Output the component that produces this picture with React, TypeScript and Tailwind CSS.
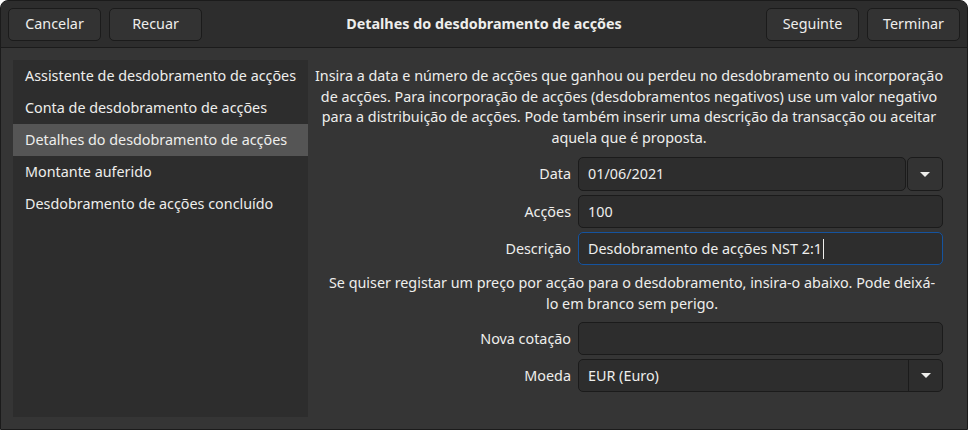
import React from 'react';

const steps = [
  'Assistente de desdobramento de acções',
  'Conta de desdobramento de acções',
  'Detalhes do desdobramento de acções',
  'Montante auferido',
  'Desdobramento de acções concluído',
];

function HeaderButton({ label }: { label: string }) {
  return (
    <button className="h-[33px] w-[93px] rounded-[5px] border border-[#1b1b1b] bg-[#333333] text-[#eeeeec]">
      {label}
    </button>
  );
}

function Caret() {
  return (
    <svg width="12" height="7" viewBox="0 0 12 7">
      <path d="M1 1h10L6 6z" fill="#eeeeec" />
    </svg>
  );
}

function FieldRow({ label, children }: { label: string; children: React.ReactNode }) {
  return (
    <>
      <div className="flex items-center justify-end">{label}</div>
      {children}
    </>
  );
}

export default function App() {
  return (
    <div
      className="w-[968px] h-[430px] overflow-hidden rounded-t-[8px] border border-[#1b1b1b] bg-[#353535] text-[14.35px] text-[#eeeeec] flex flex-col"
      style={{ fontFamily: '"Noto Sans", sans-serif' }}
    >
      <div className="h-[47px] shrink-0 border-b border-[#1b1b1b] bg-[#2d2d2d] flex items-center justify-between px-[7px]">
        <div className="flex gap-[8px]">
          <HeaderButton label="Cancelar" />
          <HeaderButton label="Recuar" />
        </div>
        <div className="font-bold">Detalhes do desdobramento de acções</div>
        <div className="flex gap-[8px]">
          <HeaderButton label="Seguinte" />
          <HeaderButton label="Terminar" />
        </div>
      </div>

      <div className="flex-1 flex p-[12px] pr-0">
        <div className="w-[295px] shrink-0 bg-[#2d2d2d] flex flex-col">
          {steps.map((s, i) => (
            <div
              key={s}
              className={`h-[32px] flex items-center px-[12px] whitespace-nowrap ${i === 2 ? 'bg-[#555555]' : ''}`}
            >
              {s}
            </div>
          ))}
        </div>

        <div className="flex-1 min-w-0 flex flex-col pt-[6px] pr-[24px]">
          <div className="text-center leading-[20.5px] pl-[7px] whitespace-nowrap">
            <div>Insira a data e número de acções que ganhou ou perdeu no desdobramento ou incorporação</div>
            <div>de acções. Para incorporação de acções (desdobramentos negativos) use um valor negativo</div>
            <div>para a distribuição de acções. Pode também inserir uma descrição da transacção ou aceitar</div>
            <div>aquela que é proposta.</div>
          </div>

          <div className="grid grid-cols-[263px_1fr] gap-x-[7px] gap-y-[4px] mt-[9px]">
            <FieldRow label="Data">
              <div className="flex h-[34px] gap-[1px]">
                <div className="flex-1 flex items-center px-[9px] bg-[#2d2d2d] border border-[#1b1b1b] rounded-[5px]">
                  01/06/2021
                </div>
                <div className="w-[36px] flex items-center justify-center bg-[#333333] border border-[#1b1b1b] rounded-[5px]">
                  <Caret />
                </div>
              </div>
            </FieldRow>
            <FieldRow label="Acções">
              <div className="h-[33px] flex items-center px-[9px] bg-[#2d2d2d] border border-[#1b1b1b] rounded-[5px]">
                100
              </div>
            </FieldRow>
            <FieldRow label="Descrição">
              <div className="h-[33px] flex items-center px-[9px] bg-[#2d2d2d] border border-[#15539e] rounded-[5px]">
                Desdobramento de acções NST 2:1
                <span className="ml-[1px] w-[1px] h-[20px] bg-[#eeeeec]" />
              </div>
            </FieldRow>
          </div>

          <div className="text-center leading-[20.5px] mt-[8px] pl-[13px] whitespace-nowrap">
            <div>Se quiser registar um preço por acção para o desdobramento, insira-o abaixo. Pode deixá-</div>
            <div>lo em branco sem perigo.</div>
          </div>

          <div className="grid grid-cols-[263px_1fr] gap-x-[7px] gap-y-[4px] mt-[8px]">
            <FieldRow label="Nova cotação">
              <div className="h-[33px] bg-[#2d2d2d] border border-[#1b1b1b] rounded-[5px]" />
            </FieldRow>
            <FieldRow label="Moeda">
              <div className="h-[33px] flex bg-[#2d2d2d] border border-[#1b1b1b] rounded-[5px]">
                <div className="flex-1 flex items-center px-[9px]">EUR (Euro)</div>
                <div className="w-[34px] flex items-center justify-center border-l border-[#1b1b1b]">
                  <Caret />
                </div>
              </div>
            </FieldRow>
          </div>
        </div>
      </div>
    </div>
  );
}
